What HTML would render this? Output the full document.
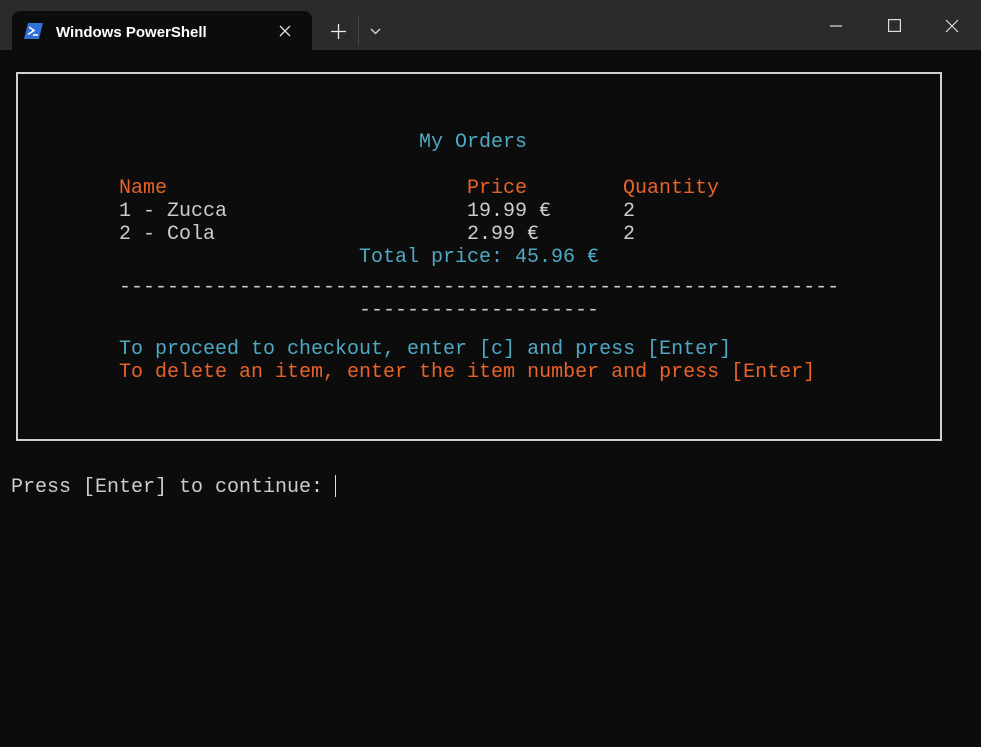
<!DOCTYPE html>
<html><head><meta charset="utf-8"><style>
html,body{margin:0;padding:0;width:981px;height:747px;overflow:hidden;background:#0c0c0c}
.title{position:absolute;left:0;top:0;width:981px;height:50px;background:#2b2b2b}
.tab{position:absolute;left:12px;top:11px;width:300px;height:40px;background:#0c0c0c;border-radius:8px 8px 0 0}
.tabt{position:absolute;left:56px;top:24px;font:600 15px "Liberation Sans",sans-serif;color:#fff}
.t{position:absolute;font:20px/23px "Liberation Mono",monospace;white-space:pre;color:#cccccc}
.o{color:#e8622a}.c{color:#4fa8c4}
.box{position:absolute;left:16px;top:72px;width:922px;height:365px;border:2px solid #d0d0d0}
</style></head><body>
<div class="title"></div>
<div class="tab"></div>
<svg style="position:absolute;left:24px;top:23px" width="19" height="16" viewBox="0 0 19 16"><path d="M4 0H19L15 16H0Z" fill="#2f6fd6"/><path d="M5 4l5 3.5-6 4" stroke="#fff" stroke-width="1.6" fill="none"/><path d="M9 12h5" stroke="#fff" stroke-width="1.6"/></svg>
<div class="tabt">Windows PowerShell</div>
<svg style="position:absolute;left:279px;top:25px" width="12" height="12"><path d="M1 1L11 11M11 1L1 11" stroke="#ddd" stroke-width="1.3"/></svg>
<svg style="position:absolute;left:331px;top:24px" width="15" height="15"><path d="M7.5 0V15M0 7.5H15" stroke="#eee" stroke-width="1.3"/></svg>
<div style="position:absolute;left:358px;top:16px;width:1px;height:30px;background:#444"></div>
<svg style="position:absolute;left:370px;top:28px" width="11" height="7"><path d="M1 1L5.5 5.5 10 1" stroke="#ddd" stroke-width="1.3" fill="none"/></svg>
<svg style="position:absolute;left:830px;top:25px" width="12" height="2"><path d="M0 1H12" stroke="#ddd" stroke-width="1.2"/></svg>
<svg style="position:absolute;left:888px;top:19px" width="13" height="13"><rect x=".6" y=".6" width="11.8" height="11.8" stroke="#ddd" stroke-width="1.2" fill="none"/></svg>
<svg style="position:absolute;left:945px;top:19px" width="14" height="14"><path d="M1 1L13 13M13 1L1 13" stroke="#ddd" stroke-width="1.2"/></svg>
<div class="box"></div>
<div class="t c" style="left:419px;top:131px">My Orders</div>
<div class="t o" style="left:119px;top:177px">Name</div>
<div class="t o" style="left:467px;top:177px">Price</div>
<div class="t o" style="left:623px;top:177px">Quantity</div>
<div class="t" style="left:119px;top:200px">1 - Zucca</div>
<div class="t" style="left:467px;top:200px">19.99 €</div>
<div class="t" style="left:623px;top:200px">2</div>
<div class="t" style="left:119px;top:223px">2 - Cola</div>
<div class="t" style="left:467px;top:223px">2.99 €</div>
<div class="t" style="left:623px;top:223px">2</div>
<div class="t c" style="left:359px;top:246px">Total price: 45.96 €</div>
<div class="t" style="left:119px;top:276px">------------------------------------------------------------</div>
<div class="t" style="left:359px;top:299px">--------------------</div>
<div class="t c" style="left:119px;top:338px">To proceed to checkout, enter [c] and press [Enter]</div>
<div class="t o" style="left:119px;top:361px">To delete an item, enter the item number and press [Enter]</div>
<div class="t" style="left:11px;top:476px">Press [Enter] to continue: </div>
<div style="position:absolute;left:335px;top:475px;width:1px;height:22px;background:#ddd"></div>
</body></html>
